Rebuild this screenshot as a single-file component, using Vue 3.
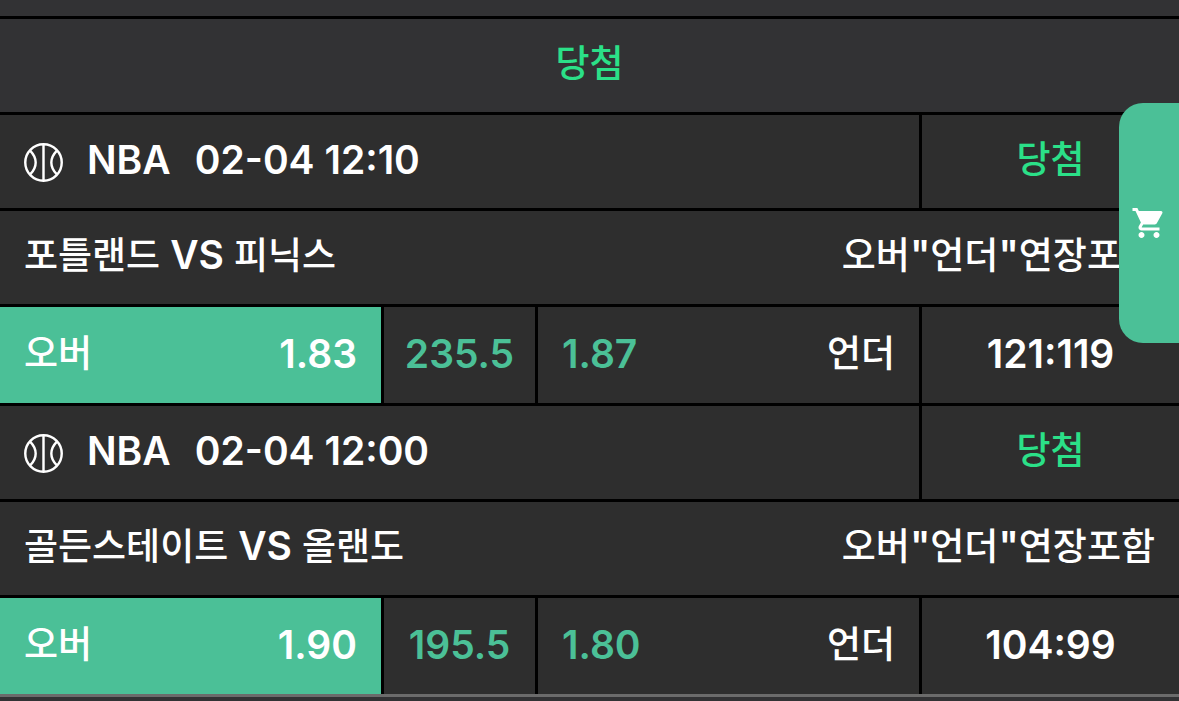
<script setup>
const overallResult = '당첨'

const games = [
  {
    id: 1,
    league: 'NBA',
    time: '02-04 12:10',
    result: '당첨',
    home: '포틀랜드',
    away: '피닉스',
    market: ['오버', '"', '언더', '"', '연장포함'],
    over: '1.83',
    line: '235.5',
    under: '1.87',
    score: '121:119',
  },
  {
    id: 2,
    league: 'NBA',
    time: '02-04 12:00',
    result: '당첨',
    home: '골든스테이트',
    away: '올랜도',
    market: ['오버', '"', '언더', '"', '연장포함'],
    over: '1.90',
    line: '195.5',
    under: '1.80',
    score: '104:99',
  },
]
</script>

<template>
  <main class="history">
    <div class="strip"></div>
    <div class="row summary"><span class="ko won">{{ overallResult }}</span></div>

    <article v-for="game in games" :key="game.id" class="game">
      <header class="row head">
        <div class="cell league">
          <svg class="ball" viewBox="0 0 40 40" aria-hidden="true">
            <circle cx="20" cy="20" r="18.700" />
            <path d="M20 1.200v37.600M6.500 8c7.300 7.500 7.300 16.500 0 24M33.500 8c-7.300 7.500-7.300 16.500 0 24" />
          </svg>
          <span>{{ game.league }}</span>
          <time>{{ game.time }}</time>
        </div>
        <div class="cell center"><span class="ko won">{{ game.result }}</span></div>
      </header>

      <div class="row teams">
        <div class="match">
          <span class="ko">{{ game.home }}</span>
          <span>VS</span>
          <span class="ko">{{ game.away }}</span>
        </div>
        <div class="market">
          <span v-for="(part, i) in game.market" :key="i" :class="{ ko: part !== '&quot;' }">{{ part }}</span>
        </div>
      </div>

      <div class="row odds">
        <div class="cell pick picked">
          <span class="ko">오버</span>
          <span>{{ game.over }}</span>
        </div>
        <div class="cell center rate">{{ game.line }}</div>
        <div class="cell pick">
          <span class="rate">{{ game.under }}</span>
          <span class="ko">언더</span>
        </div>
        <div class="cell center">{{ game.score }}</div>
      </div>
    </article>

    <footer class="next"></footer>

    <button class="cart" type="button" aria-label="장바구니">
      <svg viewBox="0 0 24 24" aria-hidden="true">
        <path d="M7 18c-1.100 0-1.990.9-1.990 2S5.900 22 7 22s2-.9 2-2-.9-2-2-2zM1 2v2h2l3.600 7.590-1.350 2.450c-.16.28-.25.61-.25.960 0 1.100.9 2 2 2h12v-2H7.420c-.14 0-.25-.11-.25-.25l.03-.12.9-1.630h7.450c.75 0 1.410-.41 1.750-1.030l3.580-6.490A1.003 1.003 0 0 0 20 4H5.210l-.94-2H1zm16 16c-1.100 0-1.990.9-1.990 2s.89 2 1.990 2 2-.9 2-2-.9-2-2-2z" />
      </svg>
    </button>
  </main>
</template>

<style>
body {
  margin: 0;
  background: #323234;
}
</style>

<style scoped>
.history {
  position: relative;
  overflow: hidden;
  background: #000;
  color: #fff;
  font-family: Inter, "Noto Sans CJK KR", sans-serif;
  font-size: 39px;
  font-weight: 600;
  line-height: 48px;
  white-space: nowrap;
}

.ko {
  font-family: "Noto Sans CJK KR", sans-serif;
  font-size: 37px;
  font-weight: 500;
}

.cell > .ko,
.summary > .ko {
  padding-bottom: 6px;
}

.strip {
  height: 16px;
  background: #323234;
}

.row {
  margin-top: 3px;
  min-height: 93px;
}

.summary {
  display: flex;
  align-items: center;
  justify-content: center;
  box-sizing: border-box;
  padding-bottom: 4px;
  background: #323234;
}

.won {
  color: #2be088;
}

.head,
.odds {
  display: grid;
  gap: 3px;
}

.head {
  grid-template-columns: 919fr 257fr;
}

.odds {
  grid-template-columns: 381fr 151fr 381fr 257fr;
  min-height: 96px;
}

.cell,
.teams {
  display: flex;
  align-items: center;
  box-sizing: border-box;
  min-width: 0;
  padding: 0 24px 4px;
  background: #2e2e2e;
}

.odds .cell {
  padding-bottom: 2px;
}

.center {
  justify-content: center;
  padding-left: 0;
  padding-right: 0;
}

.ball {
  width: 39px;
  height: 39px;
  margin: 6px 24px 0 0;
  fill: none;
  stroke: #fff;
  stroke-width: 2.5;
}

.league time {
  margin-left: 24px;
}

.teams {
  padding-bottom: 7px;
}

.teams,
.pick {
  justify-content: space-between;
}

.match {
  display: flex;
  align-items: baseline;
  gap: 10px;
}

.market {
  display: flex;
  align-items: baseline;
}

.cell.picked {
  background: #4bc097;
}

.rate {
  color: #4bc097;
}

.next {
  height: 4px;
  border-top: 3px solid #6b6b6b;
  background: #323234;
}

.cart {
  position: absolute;
  top: 103px;
  right: 0;
  display: flex;
  align-items: center;
  justify-content: center;
  width: 60px;
  height: 240px;
  padding: 0;
  border: 0;
  border-radius: 24px 0 0 24px;
  background: #4bc097;
  cursor: pointer;
}

.cart svg {
  width: 36px;
  height: 36px;
  fill: #fff;
}
</style>
